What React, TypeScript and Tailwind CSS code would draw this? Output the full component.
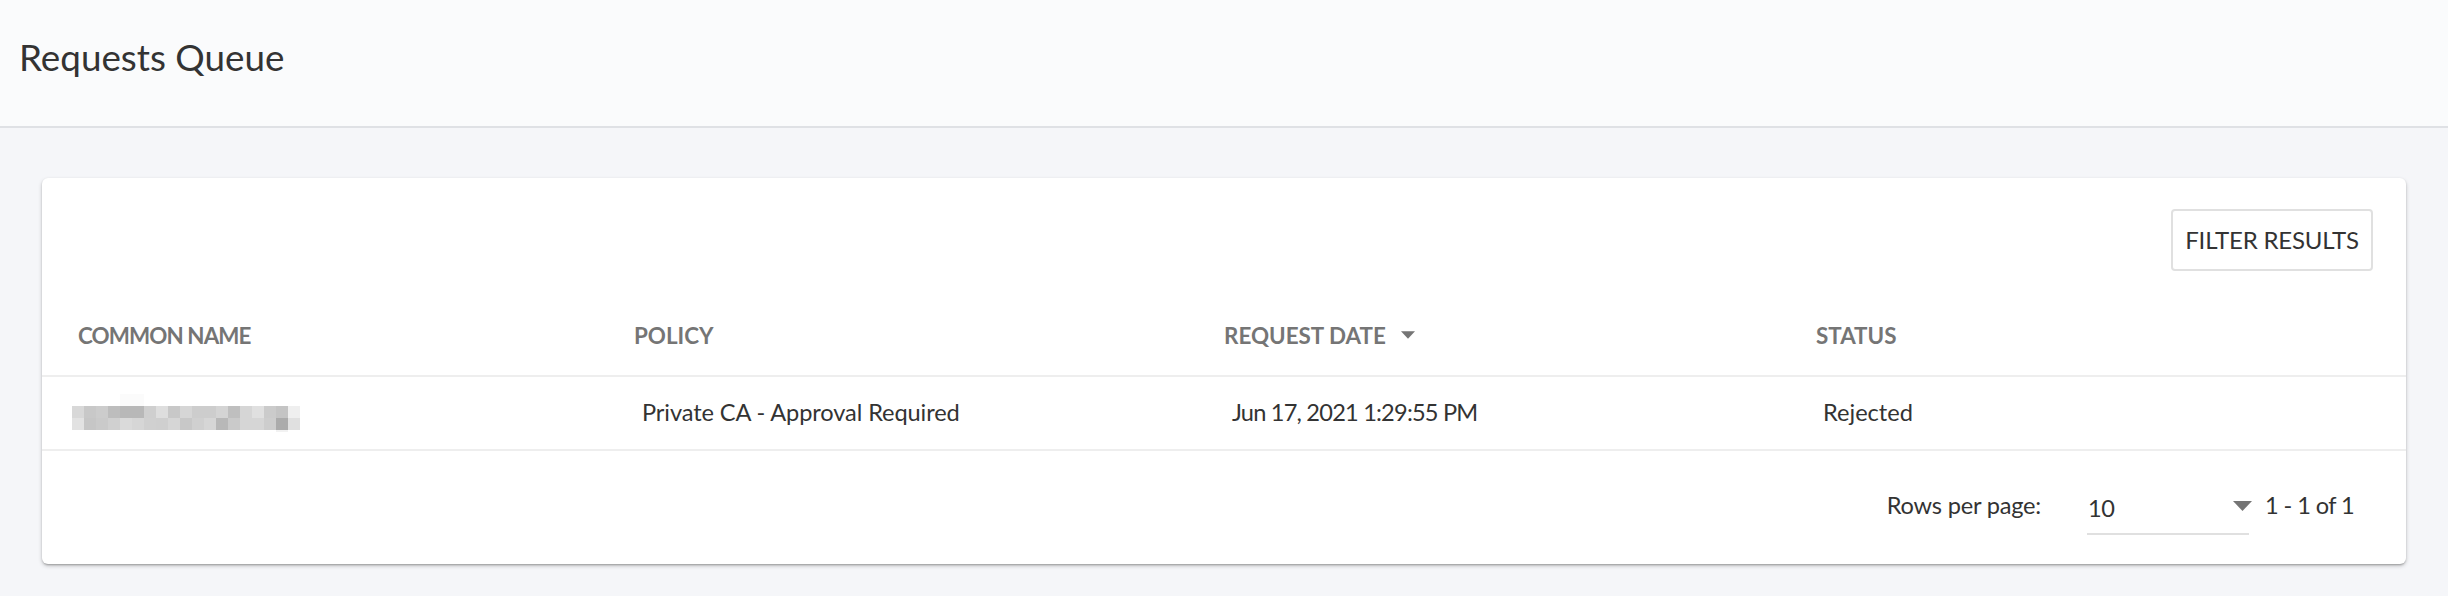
import React from "react";

const row1 = ["#d8d8d8","#c8c8c8","#cccccc","#bdbdbd","#b8b8b8","#b8b8b8","#cfcfcf","#dedede","#c8c8c8","#d6d6d6","#cdcdcd","#cdcdcd","#d4d4d4","#bfbfbf","#d6d6d6","#e0e0e0","#cbcbcb","#c4c4c4","#efefef"];
const row2 = ["#e2e2e2","#c6c6c6","#cacaca","#d0d0d0","#dadada","#d6d6d6","#d0d0d0","#cfcfcf","#d6d6d6","#c8c8c8","#d0d0d0","#d6d6d6","#b8b8b8","#cacaca","#d6d6d6","#d6d6d6","#cdcdcd","#ababab","#e0e0e0"];

function Mosaic() {
  return (
    <svg width="228" height="38" viewBox="0 0 228 38" className="block">
      <rect x="48" y="0" width="24" height="12" fill="#fbfbfb" />
      {row1.map((c, i) => (
        <rect key={"a" + i} x={i * 12} y={12} width={12} height={12.5} fill={c} />
      ))}
      {row2.map((c, i) => (
        <rect key={"b" + i} x={i * 12} y={24} width={12} height={12} fill={c} />
      ))}
      <rect x="204" y="36" width="12" height="2" fill="#f2f2f2" />
    </svg>
  );
}

function Caret({ className }: { className?: string }) {
  return (
    <svg width="19" height="10" viewBox="0 0 19 10" className={className}>
      <polygon points="0,0 19,0 9.5,10" fill="#757575" />
    </svg>
  );
}

export default function App() {
  const font = { fontFamily: "Lato, 'Noto Sans', sans-serif" };
  return (
    <div className="w-[2448px] h-[596px] bg-[#f5f6f9] text-[#333333] overflow-hidden" style={font}>
      <header className="h-[128px] bg-[#fafbfc] border-b-2 border-[#dfe1e5] pl-[19px] pt-[35px]">
        <h1 className="text-[36.8px] leading-[45px] font-normal text-[#333333]">Requests Queue</h1>
      </header>
      <main className="px-[42px] pt-[50px]">
        <div className="bg-white rounded-[6px] shadow-[0_2px_4px_rgba(0,0,0,0.2),0_1px_2px_rgba(0,0,0,0.14),0_3px_2px_-2px_rgba(0,0,0,0.12)]">
          <div className="flex justify-end pt-[31px] pr-[33px]">
            <button className="h-[62px] w-[202px] border-2 border-[#e0e0e0] rounded-[4px] text-[24px] tracking-[-0.2px] text-[#333333] bg-white">
              FILTER RESULTS
            </button>
          </div>
          <div className="mt-[25px] flex h-[81px] items-center border-b-2 border-[#eeeeee] text-[22.4px] font-bold text-[#757575]">
            <div className="w-[556px] pl-[36px] tracking-[-0.9px]">COMMON NAME</div>
            <div className="w-[590px] pl-[36px]">POLICY</div>
            <div className="w-[592px] pl-[36px] flex items-center gap-[15px]">
              <span>REQUEST DATE</span>
              <Caret className="w-[14px] h-[8px]" />
            </div>
            <div className="w-[626px] pl-[36px]">STATUS</div>
          </div>
          <div className="flex h-[74px] items-center border-b-2 border-[#eeeeee] text-[23.6px]">
            <div className="w-[556px] pl-[30px]">
              <Mosaic />
            </div>
            <div className="w-[590px] pl-[44px] tracking-[-0.1px]">Private CA - Approval Required</div>
            <div className="w-[592px] pl-[44px] tracking-[-0.8px]">Jun 17, 2021 1:29:55 PM</div>
            <div className="w-[626px] pl-[43px]">Rejected</div>
          </div>
          <div className="flex h-[113px] items-center justify-end pr-[52px] text-[23.6px]">
            <span className="tracking-[-0.2px] mb-[3px]">Rows per page:</span>
            <div className="ml-[46px] w-[162px] h-[50px] flex items-center justify-between border-b-2 border-[#e0e0e0] mt-[5px]">
              <span className="pl-[1px] tracking-[-0.5px]">10</span>
              <Caret className="mr-[-3px] mb-[6px]" />
            </div>
            <span className="ml-[16px] tracking-[-0.6px] mb-[3px]">1 - 1 of 1</span>
          </div>
        </div>
      </main>
    </div>
  );
}
